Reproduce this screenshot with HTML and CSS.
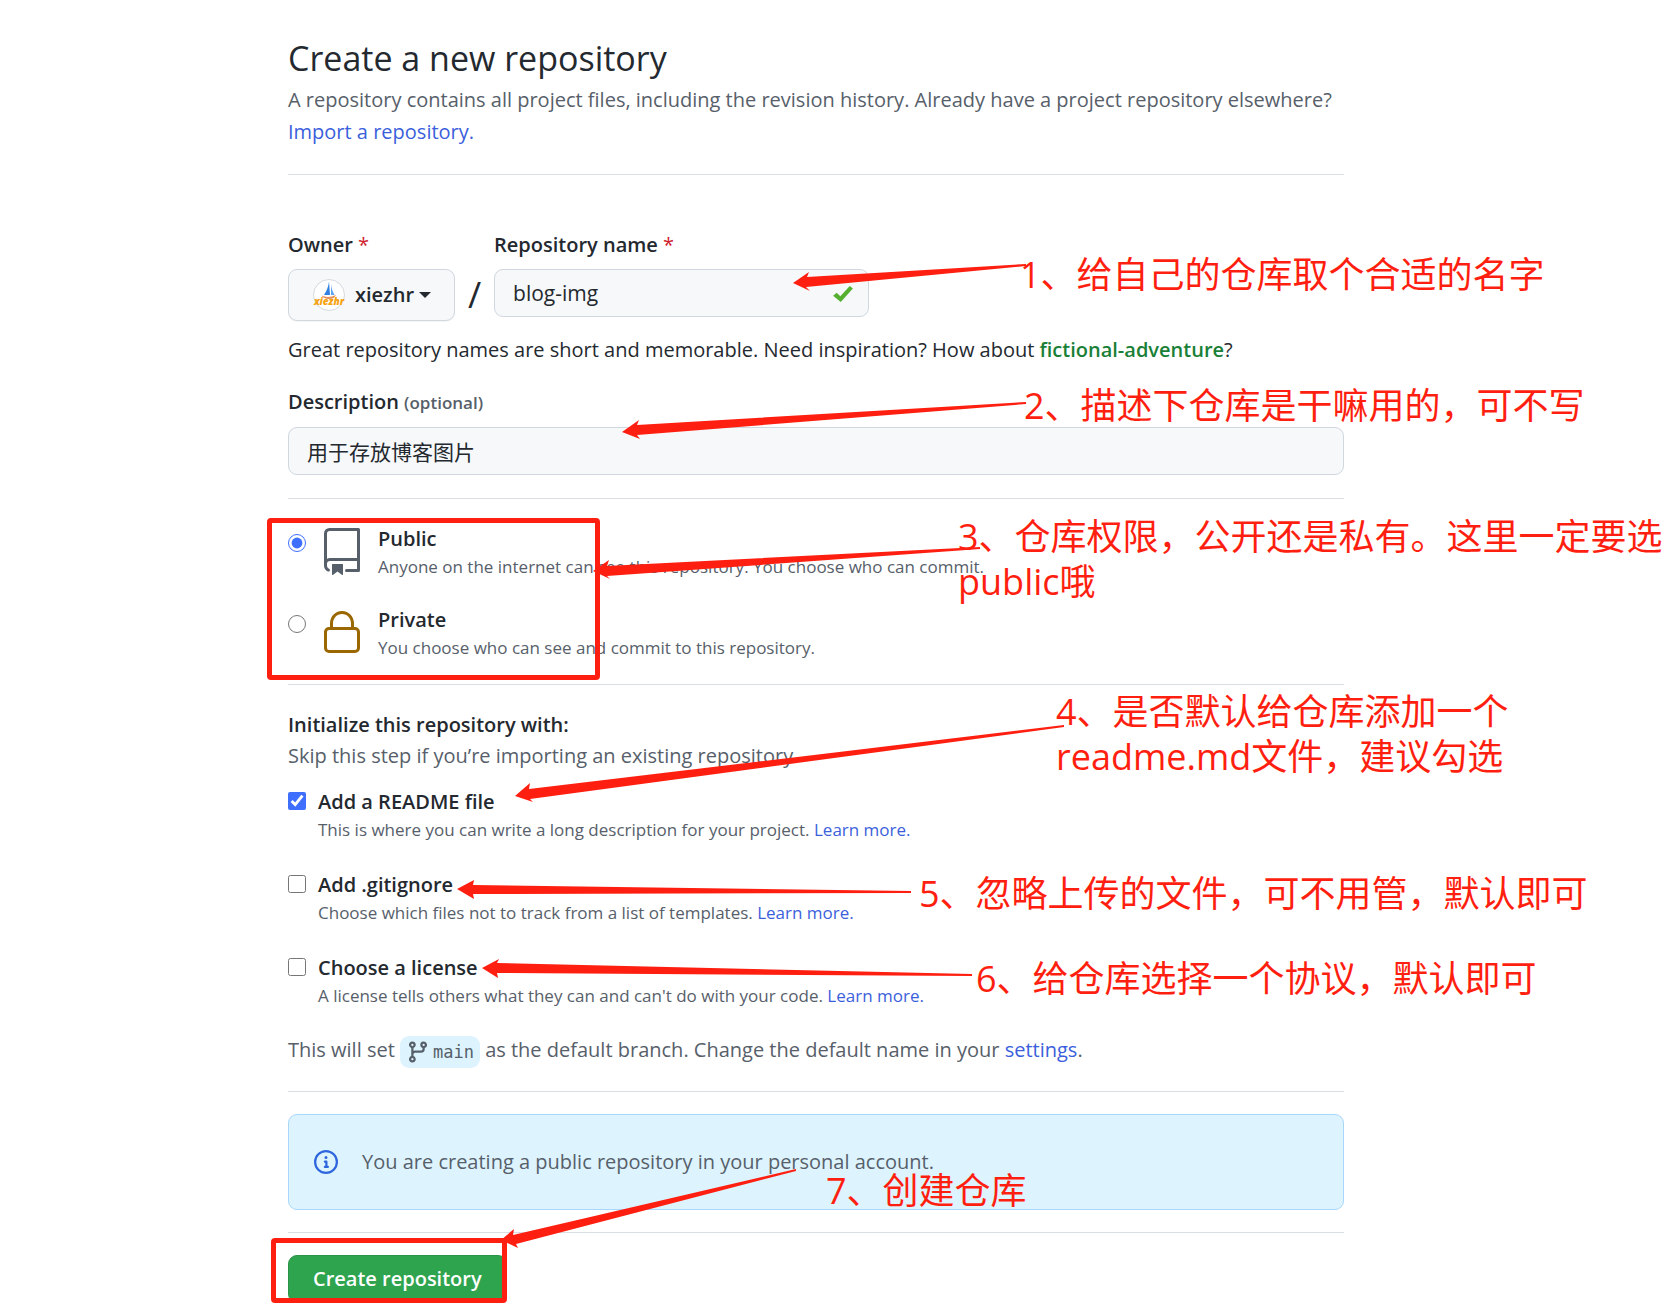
FILE: index.html
```html
<!DOCTYPE html>
<html lang="en">
<head>
  <meta charset="UTF-8">
  <meta name="viewport" content="width=device-width, initial-scale=1.0">
  <title>Create a New Repository</title>
  <link rel="stylesheet" href="styles.css">
</head>
<body>
  <main class="container">
    <header class="page-header">
      <h1>Create a new repository</h1>
      <p>A repository contains all project files, including the revision history. Already have a project repository elsewhere? <a href="#">Import a repository.</a></p>
    </header>

    <form>
      <div class="name-row">
        <div class="field">
          <label for="owner">Owner <span class="required">*</span></label>
          <button type="button" class="owner-btn" id="owner">
            <svg class="avatar" viewBox="0 0 32 32" aria-hidden="true">
              <circle cx="16" cy="16" r="15.5" fill="#fff" stroke="#d5d9dd"/>
              <path d="M16 2.500L17 16H11C13.800 12 15.500 7 16 2.500Z" fill="#2f80e0"/>
              <path d="M18 5c.4 4 1.500 7.500 3.500 11H18Z" fill="#5aa5f0"/>
              <path d="M8.500 16.500c4 2 9.500 2 14.500-.5-1.500 3-3.500 4-7 4s-6.500-1.200-7.500-3.500z" fill="#e8905a"/>
              <text x="16" y="26" text-anchor="middle" class="avatar-text">xiezhr</text>
            </svg>
            <span>xiezhr</span>
            <span class="caret"></span>
          </button>
        </div>
        <span class="slash">/</span>
        <div class="field">
          <label for="repo-name">Repository name <span class="required">*</span></label>
          <div class="input-wrap">
            <input type="text" id="repo-name" value="blog-img">
            <svg class="check" viewBox="0 0 24 20" aria-hidden="true"><path d="M1 12l4-3.500 4 4L19.500 1 23 4 9.500 19z" fill="#55b030"/></svg>
          </div>
        </div>
      </div>
      <p class="hint">Great repository names are short and memorable. Need inspiration? How about <strong class="suggestion">fictional-adventure</strong>?</p>

      <div class="field description">
        <label for="description">Description <span class="optional">(optional)</span></label>
        <input type="text" id="description" value="用于存放博客图片">
      </div>

      <div class="visibility">
        <div class="choice">
          <input type="radio" name="visibility" id="public" checked>
          <svg class="choice-icon" viewBox="0 0 24 24" fill="#57606a" aria-hidden="true"><path fill-rule="evenodd" d="M3 2.750A2.750 2.750 0 015.750 0h14.500a.75.75 0 01.75.75v20.500a.75.75 0 01-.75.75h-6a.75.75 0 010-1.500h5.250v-4H6A1.500 1.500 0 004.500 18v.75c0 .716.43 1.334 1.050 1.605a.75.75 0 01-.6 1.374A3.250 3.250 0 013 18.750v-16zM19.500 1.500V15H6c-.546 0-1.059.146-1.500.401V2.750c0-.69.56-1.250 1.250-1.250H19.500z"/><path d="M7 18.250a.25.25 0 01.25-.25h5a.25.25 0 01.25.25v5.010a.25.25 0 01-.397.201l-2.206-1.604a.25.25 0 00-.294 0L7.397 23.460a.25.25 0 01-.397-.2v-5.010z"/></svg>
          <div class="choice-text">
            <label for="public">Public</label>
            <p>Anyone on the internet can see this repository. You choose who can commit.</p>
          </div>
        </div>
        <div class="choice">
          <input type="radio" name="visibility" id="private">
          <svg class="choice-icon" viewBox="0 0 24 24" fill="#9a6700" aria-hidden="true"><path fill-rule="evenodd" d="M6 9V7.250C6 3.845 8.503 1 12 1s6 2.845 6 6.250V9h.5a2.500 2.500 0 012.500 2.500v8a2.500 2.500 0 01-2.500 2.500h-13A2.500 2.500 0 013 19.500v-8A2.500 2.500 0 015.500 9H6zm1.500-1.750C7.500 4.580 9.422 2.500 12 2.500c2.578 0 4.500 2.080 4.500 4.750V9h-9V7.250zm-3 4.250a1 1 0 011-1h13a1 1 0 011 1v8a1 1 0 01-1 1h-13a1 1 0 01-1-1v-8z"/></svg>
          <div class="choice-text">
            <label for="private">Private</label>
            <p>You choose who can see and commit to this repository.</p>
          </div>
        </div>
      </div>

      <div class="initialize">
        <h2>Initialize this repository with:</h2>
        <p class="muted">Skip this step if you’re importing an existing repository.</p>
        <div class="option">
          <input type="checkbox" id="readme" checked>
          <div>
            <label for="readme">Add a README file</label>
            <p>This is where you can write a long description for your project. <a href="#">Learn more.</a></p>
          </div>
        </div>
        <div class="option">
          <input type="checkbox" id="gitignore">
          <div>
            <label for="gitignore">Add .gitignore</label>
            <p>Choose which files not to track from a list of templates. <a href="#">Learn more.</a></p>
          </div>
        </div>
        <div class="option">
          <input type="checkbox" id="license">
          <div>
            <label for="license">Choose a license</label>
            <p>A license tells others what they can and can't do with your code. <a href="#">Learn more.</a></p>
          </div>
        </div>
        <p class="muted branch-note">This will set <span class="branch"><svg viewBox="0 0 16 16" fill="#57606a" aria-hidden="true"><path fill-rule="evenodd" d="M11.750 2.500a.75.75 0 100 1.500.75.75 0 000-1.500zm-2.250.75a2.250 2.250 0 113 2.122V6A2.500 2.500 0 0110 8.500H6a1 1 0 00-1 1v1.128a2.251 2.251 0 11-1.500 0V5.372a2.250 2.250 0 111.500 0v1.836A2.492 2.492 0 016 7h4a1 1 0 001-1v-.628A2.250 2.250 0 019.500 3.250zM4.250 12a.75.75 0 100 1.500.75.75 0 000-1.500zM3.500 3.250a.75.75 0 111.500 0 .75.75 0 01-1.500 0z"/></svg><code>main</code></span> as the default branch. Change the default name in your <a href="#">settings</a>.</p>
      </div>

      <div class="notice">
        <svg viewBox="0 0 16 16" fill="#2f66dd" aria-hidden="true"><path fill-rule="evenodd" d="M8 1.500a6.500 6.500 0 100 13 6.500 6.500 0 000-13zM0 8a8 8 0 1116 0A8 8 0 010 8zm6.500-.25A.75.75 0 017.250 7h1a.75.75 0 01.75.75v2.750h.25a.75.75 0 010 1.500h-2a.75.75 0 010-1.500h.25v-2h-.25a.75.75 0 01-.75-.75zM8 6a1 1 0 100-2 1 1 0 000 2z"/></svg>
        <span>You are creating a public repository in your personal account.</span>
      </div>

      <div class="actions">
        <button type="submit" class="create-btn">Create repository</button>
      </div>
    </form>

    <!-- tutorial notes drawn over the form -->
    <div class="notes" lang="zh-CN">
      <svg class="arrows" aria-hidden="true">
        <polygon points="505,283 521,272 519,277 738,264 738,266 518,287 522,291"/>
        <polygon points="334,432 351,420 349,425 738,402 738,404 349,435 352,439"/>
        <polygon points="305,571 321,560 319,566 692,547 692,549 319,576 322,579"/>
        <polygon points="227,796 242,783 241,789 776,725 776,727 242,799 245,802"/>
        <polygon points="169,889 186,880 185,885 623,891 623,893 185,894 186,899"/>
        <polygon points="194,968 211,959 209,963 684,974 684,976 209,973 210,978"/>
        <polygon points="213,1240 226,1229 225,1235 508,1169 508,1171 228,1244 230,1248"/>
      </svg>
      <div class="box box-visibility"></div>
      <div class="box box-create"></div>
      <p class="note note-1">1、给自己的仓库取个合适的名字</p>
      <p class="note note-2">2、描述下仓库是干嘛用的，可不写</p>
      <p class="note note-3">3、仓库权限，公开还是私有。这里一定要选<br>public哦</p>
      <p class="note note-4">4、是否默认给仓库添加一个<br>readme.md文件，建议勾选</p>
      <p class="note note-5">5、忽略上传的文件，可不用管，默认即可</p>
      <p class="note note-6">6、给仓库选择一个协议，默认即可</p>
      <p class="note note-7">7、创建仓库</p>
    </div>
  </main>
</body>
</html>
```
FILE: styles.css
```css
* {
  box-sizing: border-box;
}
body {
  margin: 0;
  padding: 0 41px 0 0;
  background: #fff;
  color: #24292f;
  font-family: "Open Sans", "Noto Sans CJK SC", sans-serif;
  font-size: 20px;
  line-height: 32px;
  overflow: hidden;
}
h1, h2, p {
  margin: 0;
}
a {
  color: #3b5fdc;
  text-decoration: none;
}
a:hover {
  text-decoration: underline;
}
.container {
  position: relative;
  max-width: 1056px;
  margin: 0 auto;
  padding-top: 34px;
}

/* header */
.page-header {
  padding-bottom: 26px;
  border-bottom: 1px solid #d8dee4;
  color: #57606a;
}
.page-header h1 {
  margin-bottom: 2px;
  color: #24292f;
  font-size: 34px;
  font-weight: 400;
  line-height: 48px;
}

/* owner / repository name */
.name-row {
  display: flex;
  align-items: flex-start;
  margin-top: 54px;
}
label,
h2 {
  font-size: 20px;
  font-weight: 600;
  line-height: 32px;
}
.field label {
  display: block;
  margin-bottom: 8px;
}
.required {
  color: #cf222e;
  font-weight: 400;
}
.optional {
  color: #57606a;
  font-size: 17px;
}
.owner-btn {
  display: flex;
  align-items: center;
  height: 52px;
  padding: 0 23px 0 24px;
  border: 1px solid #d0d7de;
  border-radius: 9px;
  background: #f6f8fa;
  box-shadow: 0 1px 0 rgba(27, 31, 36, 0.04);
  color: #24292f;
  font: inherit;
  font-weight: 600;
}
.avatar {
  width: 32px;
  height: 32px;
  margin-right: 10px;
}
.avatar-text {
  font-size: 10px;
  font-weight: 800;
  font-style: italic;
  fill: #f5a310;
}
.caret {
  margin-left: 5px;
  border: 6px solid transparent;
  border-top-color: #24292f;
  border-bottom: 0;
}
.slash {
  width: 39px;
  padding-top: 41px;
  text-align: center;
  font-size: 36px;
  font-weight: 400;
  line-height: 50px;
}
.input-wrap {
  position: relative;
}
input[type="text"] {
  display: block;
  height: 48px;
  padding: 0 18px;
  border: 1px solid #d0d7de;
  border-radius: 9px;
  background: #f6f8fa;
  color: #24292f;
  font: inherit;
}
#repo-name {
  width: 375px;
  font-size: 21px;
}
.check {
  position: absolute;
  top: 16px;
  right: 14px;
  width: 24px;
  height: 18px;
}
.hint {
  margin-top: 13px;
}
.suggestion {
  color: #1a7f37;
  font-weight: 600;
}
.description {
  margin-top: 20px;
  padding-bottom: 23px;
  border-bottom: 1px solid #d8dee4;
}
#description {
  width: 100%;
  font-size: 21px;
}

/* public / private */
.visibility {
  display: flex;
  flex-direction: column;
  gap: 25px;
  padding: 24px 0;
  border-bottom: 1px solid #d8dee4;
}
input[type="radio"],
input[type="checkbox"] {
  flex: none;
  width: 18px;
  height: 18px;
  margin: 0;
  accent-color: #3f6fff;
}
.choice {
  display: flex;
}
.choice input {
  margin-top: 11px;
}
.choice-icon {
  flex: none;
  width: 48px;
  height: 48px;
  margin: 5px 12px 0;
}
.choice-text label {
  display: block;
}
.choice p,
.option p {
  color: #57606a;
  font-size: 17px;
  line-height: 24px;
}

/* initialize */
.initialize {
  padding: 24px 0 23px;
  border-bottom: 1px solid #d8dee4;
}
.initialize h2 {
  line-height: 31px;
}
.muted {
  color: #57606a;
}
.option {
  display: flex;
  gap: 12px;
  margin-top: 14px;
  padding-bottom: 13px;
}
.option input {
  margin-top: 6px;
}
.option label {
  display: block;
}
.branch-note {
  margin-top: 13px;
}
.branch {
  display: inline-flex;
  align-items: center;
  gap: 3px;
  height: 32px;
  padding: 0 6px;
  border-radius: 9px;
  background: #ddf4ff;
  vertical-align: middle;
}
.branch svg {
  width: 24px;
  height: 24px;
}
.branch code {
  font-family: "DejaVu Sans Mono", monospace;
  font-size: 17px;
}

/* notice and submit */
.notice {
  display: flex;
  align-items: center;
  gap: 24px;
  margin: 22px 0;
  padding: 31px 25px;
  border: 1px solid #a9d6fb;
  border-radius: 9px;
  background: #ddf4ff;
  color: #57606a;
}
.notice svg {
  width: 24px;
  height: 24px;
}
.actions {
  padding-top: 22px;
  border-top: 1px solid #d8dee4;
}
.create-btn {
  height: 48px;
  padding: 0 24px;
  border: 1px solid #2b9348;
  border-radius: 9px;
  background: #2fa44e;
  color: #fff;
  font: inherit;
  font-weight: 600;
}

/* notes */
.notes {
  position: absolute;
  inset: 0;
  color: #ff1f10;
  pointer-events: none;
}
.arrows {
  width: 100%;
  height: 100%;
  overflow: visible;
  fill: #ff1f10;
}
.box {
  position: absolute;
  border: 5px solid #ff1f10;
  border-radius: 4px;
}
.box-visibility {
  left: -21px;
  top: 518px;
  width: 333px;
  height: 162px;
}
.box-create {
  left: -17px;
  top: 1238px;
  width: 236px;
  height: 65px;
}
.note {
  position: absolute;
  font-size: 36px;
  line-height: 45px;
  white-space: nowrap;
}
.note-1 {
  left: 732px;
  top: 252px;
}
.note-2 {
  left: 736px;
  top: 383px;
}
.note-3 {
  left: 670px;
  top: 514px;
}
.note-4 {
  left: 768px;
  top: 689px;
}
.note-5 {
  left: 631px;
  top: 871px;
}
.note-6 {
  left: 688px;
  top: 956px;
}
.note-7 {
  left: 538px;
  top: 1168px;
}
```
